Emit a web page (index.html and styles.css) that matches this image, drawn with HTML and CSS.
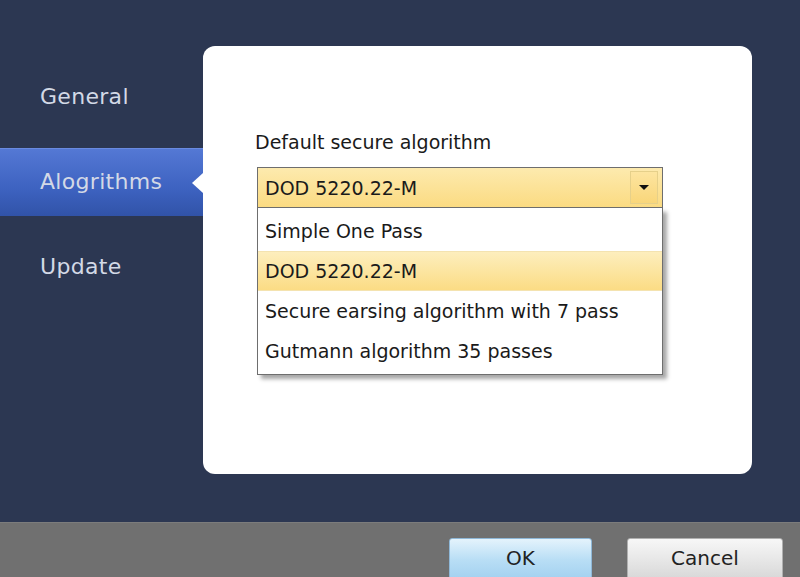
FILE: index.html
```html
<!DOCTYPE html>
<html lang="en">
<head>
    <meta charset="UTF-8">
    <meta name="viewport" content="width=device-width, initial-scale=1.0">
    <title>Settings</title>
    <link rel="stylesheet" href="styles.css">
</head>
<body>
    <div class="window">
        <div class="main">
            <div class="sidebar">
                <div class="nav-item">General</div>
                <div class="nav-item active">Alogrithms</div>
                <div class="nav-item">Update</div>
            </div>
            <div class="panel">
                <div class="label">Default secure algorithm</div>
                <div class="combo">
                    <div class="combo-box">
                        <span class="combo-value">DOD 5220.22-M</span>
                        <span class="combo-btn"><span class="arrow"></span></span>
                    </div>
                    <ul class="dropdown">
                        <li>Simple One Pass</li>
                        <li class="selected">DOD 5220.22-M</li>
                        <li>Secure earsing algorithm with 7 pass</li>
                        <li>Gutmann algorithm 35 passes</li>
                    </ul>
                </div>
            </div>
        </div>
        <div class="footer">
            <button class="btn ok">OK</button>
            <button class="btn cancel">Cancel</button>
        </div>
    </div>
</body>
</html>
```

FILE: styles.css
```css
body {
    margin: 0;
    font-family: "DejaVu Sans", sans-serif;
    background-color: #2c3752;
    overflow: hidden;
}

.window {
    width: 800px;
    height: 577px;
    display: flex;
    flex-direction: column;
}

.main {
    height: 522px;
    flex-shrink: 0;
    display: flex;
}

.sidebar {
    width: 203px;
    padding-top: 63px;
    display: flex;
    flex-direction: column;
    gap: 17px;
}

.nav-item {
    height: 68px;
    line-height: 68px;
    padding-left: 40px;
    color: #d3d9e6;
    font-size: 22px;
    letter-spacing: 0.3px;
    position: relative;
}

.nav-item.active {
    background: linear-gradient(#5478d4, #3d62c0 60%, #3153a8);
    border-top: 1px solid #6a8ae0;
    height: 67px;
    line-height: 66px;
}

.nav-item.active::after {
    content: "";
    position: absolute;
    right: 0;
    top: 24px;
    border-top: 10px solid transparent;
    border-bottom: 10px solid transparent;
    border-right: 11px solid #fff;
}

.panel {
    width: 549px;
    height: 428px;
    margin-top: 46px;
    background-color: #fff;
    border-radius: 12px;
    padding: 0 0 0 52px;
    box-sizing: border-box;
}

.label {
    margin-top: 84px;
    font-size: 19px;
    color: #1a1a1a;
    line-height: 24px;
}

.combo {
    margin-top: 13px;
    margin-left: 2px;
    width: 406px;
    position: relative;
}

.combo-box {
    height: 41px;
    box-sizing: border-box;
    border: 1px solid #6e6e6e;
    background: linear-gradient(#fdeaae, #fbdb82);
    display: flex;
    align-items: center;
    justify-content: space-between;
    padding: 0 4px 0 7px;
}

.combo-value {
    font-size: 19px;
    color: #1a1a1a;
}

.combo-btn {
    width: 26px;
    height: 31px;
    border: 1px solid #e6d08a;
    background: linear-gradient(#fde5a0, #f9d67a);
    display: flex;
    align-items: center;
    justify-content: center;
}

.arrow {
    border-left: 5px solid transparent;
    border-right: 5px solid transparent;
    border-top: 5px solid #111;
}

.dropdown {
    list-style: none;
    margin: 0;
    padding: 3px 0;
    border: 1px solid #6e6e6e;
    border-top: none;
    background-color: #fff;
    box-shadow: 4px 4px 4px rgba(0, 0, 0, 0.35);
}

.dropdown li {
    height: 40px;
    line-height: 40px;
    padding-left: 7px;
    font-size: 19px;
    color: #1a1a1a;
}

.dropdown li.selected {
    background: linear-gradient(#fdeebd, #fbdc84);
    border-top: 1px solid #f4e3b0;
    border-bottom: 1px solid #f4e3b0;
    height: 38px;
    line-height: 38px;
}

.footer {
    flex: 1;
    overflow: hidden;
    background-color: #707070;
    border-top: 1px solid #7c7c7c;
    display: flex;
    justify-content: flex-end;
    align-items: flex-start;
    padding: 15px 17px 0 0;
    gap: 35px;
}

.btn {
    flex-shrink: 0;
    height: 48px;
    font-family: "DejaVu Sans", sans-serif;
    font-size: 20px;
    color: #222;
    border-radius: 3px;
    padding: 0 0 8px;
}

.ok {
    width: 143px;
    border: 1px solid #8fb8d8;
    background: linear-gradient(#e4f3fc, #b9def5 45%, #9ccdee);
}

.cancel {
    width: 156px;
    border: 1px solid #b0b0b0;
    background: linear-gradient(#f7f7f7, #e7e7e7 45%, #d3d3d3);
}
```
